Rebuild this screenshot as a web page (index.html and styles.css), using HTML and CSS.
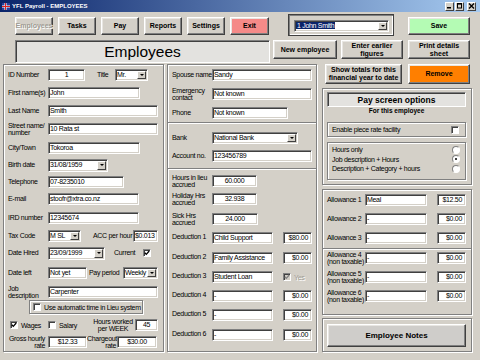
FILE: index.html
```html
<!DOCTYPE html>
<html lang="en">
  <head>
    <meta charset="UTF-8" />
    <title>YFL Payroll - EMPLOYEES</title>
    <link rel="stylesheet" href="styles.css">
  </head>
  <body>
    <div class="titlebar">
      <svg class="app-icon" width="8" height="7" viewBox="0 0 8 7">
        <rect width="8" height="7" fill="#2a3f9a" />
        <rect x="0" y="2.5" width="8" height="2" fill="#fff" />
        <rect x="2.5" y="0" width="2" height="7" fill="#fff" />
        <rect x="0" y="3" width="8" height="1" fill="#d22" />
        <rect x="3" y="0" width="1" height="7" fill="#d22" />
      </svg>
      <span class="title">YFL Payroll - EMPLOYEES</span>
      <div class="wincontrols">
        <span class="wbtn"><svg width="7" height="6" viewBox="0 0 7 6"><rect x="1" y="4" width="4" height="1.5" fill="#000" /></svg></span>
        <span class="wbtn"><svg width="7" height="6" viewBox="0 0 7 6"><rect x="1.5" y="0.5" width="4" height="4.5" fill="none" stroke="#000" /><rect x="1" y="0" width="5" height="1.6" fill="#000" /></svg></span>
        <span class="wbtn close"><svg width="7" height="6" viewBox="0 0 7 6"><path d="M1 0.5 L6 5.5 M6 0.5 L1 5.5" stroke="#000" stroke-width="1.3" /></svg></span>
      </div>
    </div>

    <!-- top navigation -->
    <div class="toolbar">
      <button class="btn nav off">Employees</button>
      <button class="btn nav">Tasks</button>
      <button class="btn nav">Pay</button>
      <button class="btn nav">Reports</button>
      <button class="btn nav">Settings</button>
      <button class="btn nav exit">Exit</button>
      <div class="picker">
        <div class="field sel picker-combo">
          <span class="val"><span class="hl">1 John Smith</span></span><span class="arrow"></span>
        </div>
      </div>
      <button class="btn save">Save</button>
    </div>

    <div class="headrow">
      <div class="heading">Employees</div>
      <button class="btn act new">New employee</button>
      <button class="btn act earlier">Enter earlier<br>figures</button>
      <button class="btn act print">Print details<br>sheet</button>
    </div>

    <div class="main">
      <!-- personal details -->
      <div class="panel left">
        <div class="row">
          <span class="lbl">ID Number</span>
          <span class="field w37 center">1</span>
          <span class="lbl-in title-lbl">Title</span>
          <span class="field sel w33"><span class="val">Mr.</span><span class="arrow"></span></span>
        </div>
        <div class="row">
          <span class="lbl">First name(s)</span>
          <span class="field w92">John</span>
        </div>
        <div class="row">
          <span class="lbl">Last Name</span>
          <span class="field w110">Smith</span>
        </div>
        <div class="row">
          <span class="lbl">Street name/<br>number</span>
          <span class="field w110">10 Rata st</span>
        </div>
        <div class="row">
          <span class="lbl">City/Town</span>
          <span class="field w92">Tokoroa</span>
        </div>
        <div class="row">
          <span class="lbl">Birth date</span>
          <span class="field sel w60 tall"><span class="val">31/08/1959</span><span class="arrow"></span></span>
        </div>
        <div class="row">
          <span class="lbl">Telephone</span>
          <span class="field w76">07-8235010</span>
        </div>
        <div class="row">
          <span class="lbl">E-mail</span>
          <span class="field w91">stoofr@xtra.co.nz</span>
        </div>
        <div class="row">
          <span class="lbl">IRD number</span>
          <span class="field w91">12345674</span>
        </div>
        <div class="row">
          <span class="lbl">Tax Code</span>
          <span class="field sel w33"><span class="val">M SL</span><span class="arrow"></span></span>
          <span class="lbl-in acc-lbl">ACC per hour</span>
          <span class="field w25">$0.013</span>
        </div>
        <div class="row">
          <span class="lbl">Date Hired</span>
          <span class="field sel w57 tall"><span class="val">23/09/1999</span><span class="arrow"></span></span>
          <span class="lbl-in current-lbl">Current</span>
          <span class="chk on"><svg width="6" height="6" viewBox="0 0 6 6"><path d="M0.8 2.8 L2.3 4.4 L5.2 1" fill="none" stroke="#000" stroke-width="1.3" /></svg></span>
        </div>
        <div class="row">
          <span class="lbl">Date left</span>
          <span class="field w39">Not yet</span>
          <span class="lbl-in period-lbl">Pay period</span>
          <span class="field sel w35"><span class="val">Weekly</span><span class="arrow"></span></span>
        </div>
        <div class="row">
          <span class="lbl">Job<br>description</span>
          <span class="field w110">Carpenter</span>
        </div>
        <div class="row">
          <div class="lieu-box">
            <span class="chk"></span>
            <span>Use automatic time in Lieu system</span>
          </div>
        </div>
        <div class="row">
          <span class="opt wages"><span class="chk on"><svg width="6" height="6" viewBox="0 0 6 6"><path d="M0.8 2.8 L2.3 4.4 L5.2 1" fill="none" stroke="#000" stroke-width="1.3" /></svg></span>Wages</span>
          <span class="opt salary"><span class="chk"></span>Salary</span>
          <span class="lbl-in hours-lbl">Hours worked<br>per WEEK</span>
          <span class="field w23 center">45</span>
        </div>
        <div class="row">
          <span class="lbl right gross-lbl">Gross hourly<br>rate</span>
          <span class="field w39 center">$12.33</span>
          <span class="lbl-in right charge-lbl">Chargeout<br>rate</span>
          <span class="field w40 center">$30.00</span>
        </div>
      </div>

      <!-- contacts, bank, deductions -->
      <div class="panel mid">
        <div class="sect sect-a">
          <div class="row">
            <span class="lbl">Spouse name</span>
            <span class="field w100">Sandy</span>
          </div>
          <div class="row">
            <span class="lbl">Emergency<br>contact</span>
            <span class="field w100">Not known</span>
          </div>
          <div class="row">
            <span class="lbl">Phone</span>
            <span class="field w76">Not known</span>
          </div>
        </div>
        <div class="sect sect-b">
          <div class="row">
            <span class="lbl">Bank</span>
            <span class="field sel w86"><span class="val">National Bank</span><span class="arrow"></span></span>
          </div>
          <div class="row">
            <span class="lbl">Account no.</span>
            <span class="field w100">123456789</span>
          </div>
        </div>
        <div class="sect sect-c">
          <div class="row">
            <span class="lbl">Hours in lieu<br>accrued</span>
            <span class="field w45 center">60.000</span>
          </div>
          <div class="row">
            <span class="lbl">Holiday Hrs<br>accrued</span>
            <span class="field w45 center">32.938</span>
          </div>
          <div class="row">
            <span class="lbl">Sick Hrs<br>accrued</span>
            <span class="field w46 center">24.000</span>
          </div>
          <div class="row">
            <span class="lbl ded">Deduction 1</span>
            <span class="field w61">Child Support</span>
            <span class="field amt">$80.00</span>
          </div>
          <div class="row">
            <span class="lbl ded">Deduction 2</span>
            <span class="field w61">Family Assistance</span>
            <span class="field amt">$0.00</span>
          </div>
          <div class="row">
            <span class="lbl ded">Deduction 3</span>
            <span class="field w61">Student Loan</span>
            <span class="opt yes"><span class="chk on dis"><svg width="6" height="6" viewBox="0 0 6 6"><path d="M0.8 2.8 L2.3 4.4 L5.2 1" fill="none" stroke="#808080" stroke-width="1.3" /></svg></span>Yes</span>
          </div>
          <div class="row">
            <span class="lbl ded">Deduction 4</span>
            <span class="field w61">-</span>
            <span class="field amt">$0.00</span>
          </div>
          <div class="row">
            <span class="lbl ded">Deduction 5</span>
            <span class="field w61">-</span>
            <span class="field amt">$0.00</span>
          </div>
          <div class="row">
            <span class="lbl ded">Deduction 6</span>
            <span class="field w61">-</span>
            <span class="field amt">$0.00</span>
          </div>
        </div>
      </div>

      <!-- pay options and allowances -->
      <div class="side">
        <div class="side-btns">
          <button class="btn totals">Show totals for this<br>financial year to date</button>
          <button class="btn remove">Remove</button>
        </div>

        <div class="panel payopts">
          <div class="opt-title">Pay screen options</div>
          <div class="opt-sub">For this employee</div>
          <div class="piece">
            <span>Enable piece rate facility</span>
            <span class="chk"></span>
          </div>
          <div class="radios">
            <div class="radio-row"><span>Hours only</span><span class="radio"></span></div>
            <div class="radio-row"><span>Job description + Hours</span><span class="radio on"></span></div>
            <div class="radio-row"><span>Description + Category + hours</span><span class="radio"></span></div>
          </div>
        </div>

        <div class="panel allow">
          <div class="sect allow-a">
            <div class="row">
              <span class="lbl alw">Allowance 1</span>
              <span class="field w62">Meal</span>
              <span class="field amt">$12.50</span>
            </div>
            <div class="row">
              <span class="lbl alw">Allowance 2</span>
              <span class="field w62">-</span>
              <span class="field amt">$0.00</span>
            </div>
            <div class="row">
              <span class="lbl alw">Allowance 3</span>
              <span class="field w62">-</span>
              <span class="field amt">$0.00</span>
            </div>
          </div>
          <div class="sect allow-b">
            <div class="row">
              <span class="lbl alw">Allowance 4<br>(non taxable)</span>
              <span class="field w62">-</span>
              <span class="field amt">$0.00</span>
            </div>
            <div class="row">
              <span class="lbl alw">Allowance 5<br>(non taxable)</span>
              <span class="field w62">-</span>
              <span class="field amt">$0.00</span>
            </div>
            <div class="row">
              <span class="lbl alw">Allowance 6<br>(non taxable)</span>
              <span class="field w62">-</span>
              <span class="field amt">$0.00</span>
            </div>
          </div>
        </div>

        <div class="panel notes">
          <button class="btn notes-btn">Employee Notes</button>
        </div>
      </div>
    </div>
  </body>
</html>
```

FILE: styles.css
```css
* {
  box-sizing: border-box;
}
body {
  margin: 0;
  width: 480px;
  height: 360px;
  overflow: hidden;
  background: #d4d0c8;
  font-family: 'Liberation Sans', Arial, sans-serif;
  font-size: 7px;
  letter-spacing: -0.3px;
  color: #000;
}

/* window title */
.titlebar {
  height: 12px;
  display: flex;
  align-items: center;
  padding: 0 4px 0 2px;
  background: linear-gradient(90deg, #0a246a, #a6caf0);
  color: #fff;
  font: bold 6px 'Liberation Sans', sans-serif;
  letter-spacing: 0;
}
.app-icon {
  margin-right: 2px;
}
.title {
  flex: 1;
}
.wincontrols {
  display: flex;
  gap: 1px;
}
.wbtn {
  width: 9px;
  height: 9px;
  display: flex;
  align-items: center;
  justify-content: center;
  background: #d4d0c8;
  border: 1px solid;
  border-color: #fff #404040 #404040 #fff;
}
.wbtn.close {
  margin-left: 2px;
}

/* buttons */
.btn {
  margin: 0;
  padding: 0;
  flex: none;
  display: flex;
  align-items: center;
  justify-content: center;
  text-align: center;
  font: bold 7px 'Liberation Sans', sans-serif;
  letter-spacing: 0;
  line-height: 8px;
  color: #000;
  background: #d4d0c8;
  border: 1px solid;
  border-color: #fff #404040 #404040 #fff;
  box-shadow: inset -1px -1px #808080, inset 1px 1px #e8e6e2;
}
.btn.off {
  color: #a09c94;
  text-shadow: 1px 1px #fff;
}
.toolbar {
  height: 22px;
  margin-top: 2px;
  padding-left: 15px;
  display: flex;
  align-items: center;
  gap: 5px;
}
.nav {
  width: 38px;
  height: 18px;
  margin-top: 2px;
}
.exit {
  width: 39px;
  background: #f58a88;
}
.picker {
  width: 106px;
  height: 22px;
  margin-left: 14px;
  padding: 5px 5px 0 5px;
  border: 1px solid #404040;
  box-shadow: inset 1px 1px #808080, inset -1px -1px #fff;
}
.picker-combo {
  width: 95px;
}
.hl {
  background: #0a246a;
  color: #fff;
  padding: 0 1px;
}
.save {
  width: 62px;
  height: 18px;
  margin-left: 9px;
  margin-top: 2px;
  background: #b4fbb4;
}

.headrow {
  height: 24px;
  margin-top: 4px;
  padding-left: 15px;
  display: flex;
  align-items: flex-start;
}
.heading {
  width: 255px;
  height: 23px;
  display: flex;
  align-items: center;
  justify-content: center;
  font: 15.5px 'Liberation Sans', sans-serif;
  letter-spacing: 0;
  background: #e3e2df;
  border: 1px solid;
  border-color: #808080 #fff #fff #808080;
  box-shadow: inset 1px 1px #404040;
}
.act {
  height: 19px;
}
.new {
  width: 64px;
  margin-left: 3px;
}
.earlier {
  width: 62px;
  margin-left: 4px;
}
.print {
  width: 62px;
  margin-left: 5px;
}

/* main area */
.main {
  height: 288px;
  padding-left: 3px;
  display: flex;
}
.panel {
  border: 1px solid #808080;
  box-shadow: inset 1px 1px #fff, 1px 1px #fff;
}
.row {
  display: flex;
  align-items: center;
  height: 12px;
  white-space: nowrap;
}
.lbl {
  width: 40px;
  flex: none;
  line-height: 7.5px;
}
.lbl-in {
  flex: none;
  line-height: 7.5px;
}
.right {
  text-align: right;
}

/* inputs */
.field {
  flex: none;
  height: 12px;
  padding: 0 1px;
  background: #fff;
  border: 1px solid;
  border-color: #808080 #fff #fff #808080;
  box-shadow: inset 1px 1px #404040, inset -1px -1px #d4d0c8;
  line-height: 10px;
  white-space: nowrap;
  overflow: hidden;
}
.field.center {
  text-align: center;
}
.field.tall {
  height: 13px;
}
.sel {
  display: flex;
  padding-right: 1px;
}
.sel .val {
  flex: 1;
  overflow: hidden;
}
.arrow {
  width: 9px;
  height: 8px;
  margin-top: 1px;
  flex: none;
  display: flex;
  align-items: center;
  justify-content: center;
  background: #d4d0c8;
  border: 1px solid;
  border-color: #fff #404040 #404040 #fff;
}
.tall .arrow {
  height: 9px;
}
.arrow::after {
  content: '';
  border-left: 2px solid transparent;
  border-right: 2px solid transparent;
  border-top: 2px solid #000;
}
.amt {
  width: 29px;
  margin-left: 10px;
  text-align: right;
  padding-right: 3px;
}
.w23 { width: 23px; }
.w25 { width: 25px; }
.w33 { width: 33px; }
.w35 { width: 35px; }
.w37 { width: 37px; }
.w39 { width: 39px; }
.w40 { width: 40px; }
.w45 { width: 45px; }
.w46 { width: 46px; }
.w57 { width: 57px; }
.w60 { width: 60px; }
.w61 { width: 61px; }
.w62 { width: 62px; }
.w76 { width: 76px; }
.w86 { width: 86px; }
.w91 { width: 91px; }
.w92 { width: 92px; }
.w100 { width: 100px; }
.w110 { width: 110px; }

.chk {
  width: 8px;
  height: 8px;
  flex: none;
  display: flex;
  align-items: center;
  justify-content: center;
  background: #fff;
  border: 1px solid;
  border-color: #808080 #fff #fff #808080;
  box-shadow: inset 1px 1px #404040;
}
.chk.dis {
  background: #d4d0c8;
}
.radio {
  width: 8px;
  height: 8px;
  flex: none;
  display: flex;
  align-items: center;
  justify-content: center;
  background: #fff;
  border-radius: 50%;
  border: 1px solid;
  border-color: #808080 #fff #fff #808080;
}
.radio.on::after {
  content: '';
  width: 2px;
  height: 2px;
  border-radius: 50%;
  background: #000;
}

/* left panel */
.left {
  width: 161px;
  height: 288px;
  padding: 4px 3px 0 4px;
  display: grid;
  grid-template-rows: 18px 18px 18px 19px 17px 17px 17px 19px 18px 17px 20px 19px 14px 19px 17px 12px;
}
.title-lbl {
  width: 18px;
  margin-left: 12px;
}
.acc-lbl {
  width: 40px;
  margin-left: 12px;
}
.current-lbl {
  width: 29px;
  margin-left: 9px;
}
.period-lbl {
  width: 34px;
  margin-left: 2px;
}
.lieu-box {
  width: 114px;
  height: 14px;
  margin-left: 21px;
  padding-left: 3px;
  display: flex;
  align-items: center;
  gap: 3px;
  border: 1px solid #808080;
  box-shadow: inset 1px 1px #fff, 1px 1px #fff;
}
.row:has(.lieu-box) {
  height: 14px;
}
.opt {
  display: flex;
  align-items: center;
  gap: 3px;
  flex: none;
}
.wages {
  width: 40px;
  padding-left: 2px;
}
.salary {
  width: 43px;
}
.hours-lbl {
  width: 44px;
  text-align: center;
}
.gross-lbl {
  width: 37px;
  margin-right: 3px;
}
.charge-lbl {
  width: 29px;
  margin-right: 1px;
}

/* middle panel */
.mid {
  width: 150px;
  height: 288px;
  margin-left: 3px;
  display: flex;
  flex-direction: column;
}
.sect {
  display: grid;
  padding-left: 4px;
}
.sect-a {
  height: 57px;
  padding-top: 4px;
  grid-template-rows: 19px 19px 12px;
}
.sect-b {
  height: 46px;
  padding-top: 9px;
  grid-template-rows: 18px 12px;
  border-top: 1px solid #808080;
  box-shadow: inset 0 1px #fff;
}
.sect-c {
  flex: 1;
  padding-top: 6px;
  grid-template-rows: 18px 20px 19px 20px 19px 19px 19px 20px 12px;
  border-top: 1px solid #808080;
  box-shadow: inset 0 1px #fff;
}
.ded {
  align-self: flex-start;
  padding-top: 1px;
}
.yes {
  margin-left: 10px;
  color: #a09c94;
  text-shadow: 1px 1px #fff;
}

/* right column */
.side {
  width: 150px;
  margin-left: 5px;
  display: flex;
  flex-direction: column;
}
.side-btns {
  height: 20px;
  margin-bottom: 4px;
  padding-left: 3px;
  display: flex;
  gap: 6px;
}
.totals {
  width: 77px;
  height: 20px;
}
.remove {
  width: 62px;
  height: 20px;
  background: #ff7f00;
}
.payopts {
  height: 97px;
  padding: 3px 5px 0 4px;
}
.opt-title {
  height: 15px;
  display: flex;
  align-items: center;
  justify-content: center;
  font: bold 8.5px 'Liberation Sans', sans-serif;
  letter-spacing: 0;
  background: #e3e2df;
  border: 1px solid;
  border-color: #808080 #fff #fff #808080;
  box-shadow: inset 1px 1px #404040;
}
.opt-sub {
  height: 15px;
  line-height: 15px;
  text-align: center;
  font: bold 6.5px 'Liberation Sans', sans-serif;
  letter-spacing: 0;
}
.piece {
  height: 15px;
  padding: 0 6px 0 4px;
  display: flex;
  align-items: center;
  justify-content: space-between;
  border: 1px solid #808080;
  box-shadow: inset 1px 1px #fff, 1px 1px #fff;
}
.radios {
  height: 38px;
  margin-top: 5px;
  padding: 2px 5px 0 4px;
  border: 1px solid #808080;
  box-shadow: inset 1px 1px #fff, 1px 1px #fff;
}
.radio-row {
  height: 9.5px;
  display: flex;
  align-items: center;
  justify-content: space-between;
}
.allow {
  height: 126px;
  margin-top: 4px;
}
.allow-a {
  height: 58px;
  padding-top: 4px;
  grid-template-rows: 19px 19px 12px;
}
.allow-b {
  padding-top: 3px;
  grid-template-rows: 19px 19px 12px;
  border-top: 1px solid #808080;
  box-shadow: inset 0 1px #fff;
}
.alw {
  width: 38px;
}
.notes {
  height: 34px;
  margin-top: 3px;
  padding: 5px 4px;
}
.notes-btn {
  width: 139px;
  height: 23px;
  font-size: 8px;
  background: #cfcdca;
}
```
